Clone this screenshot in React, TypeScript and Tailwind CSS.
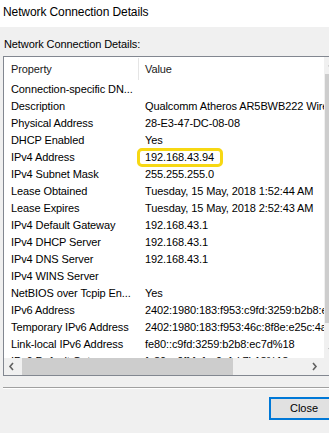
const ROWS: [string, string][] = [
  ["Connection-specific DN...", ""],
  ["Description", "Qualcomm Atheros AR5BWB222 Wireless Network Adapter"],
  ["Physical Address", "28-E3-47-DC-08-08"],
  ["DHCP Enabled", "Yes"],
  ["IPv4 Address", "192.168.43.94"],
  ["IPv4 Subnet Mask", "255.255.255.0"],
  ["Lease Obtained", "Tuesday, 15 May, 2018 1:52:44 AM"],
  ["Lease Expires", "Tuesday, 15 May, 2018 2:52:43 AM"],
  ["IPv4 Default Gateway", "192.168.43.1"],
  ["IPv4 DHCP Server", "192.168.43.1"],
  ["IPv4 DNS Server", "192.168.43.1"],
  ["IPv4 WINS Server", ""],
  ["NetBIOS over Tcpip En...", "Yes"],
  ["IPv6 Address", "2402:1980:183:f953:c9fd:3259:b2b8:ec7d"],
  ["Temporary IPv6 Address", "2402:1980:183:f953:46c:8f8e:e25c:4a21"],
  ["Link-local IPv6 Address", "fe80::c9fd:3259:b2b8:ec7d%18"],
  ["IPv6 Default Gateway", "fe80::c0ff:fe1a:9c1d:7b18%18"],
];

function Chevron({ dir }: { dir: "left" | "right" | "up" | "down" }) {
  const d = {
    left: "M5 1 L2 4.5 L5 8",
    right: "M2 1 L5 4.5 L2 8",
    up: "M1 5.5 L4.5 2 L8 5.5",
    down: "M1 3 L4.5 6.5 L8 3",
  }[dir];
  return (
    <svg width="9" height="9" viewBox="0 0 9 9">
      <path d={d} fill="none" stroke="#606060" strokeWidth="1.6" />
    </svg>
  );
}

export default function App() {
  return (
    <div className="relative w-[329px] h-[433px] overflow-hidden bg-[#f0f0f0] font-['Liberation_Sans',Arial,sans-serif] text-black">
      {/* Title bar */}
      <div className="h-[27px] bg-white pl-[3px] pt-[5px] text-[12px] leading-[15px] tracking-[-0.1px] whitespace-nowrap">
        Network Connection Details
      </div>

      <div className="pl-[4px] pt-[11px] text-[11px] leading-[13px] tracking-[-0.1px] whitespace-nowrap">Network Connection Details:</div>

      {/* List view */}
      <div className="mt-[5px] ml-[3px] w-[340px] flex border border-[#828790] bg-white text-[11px] leading-[13px] tracking-[-0.1px]">
        <div className="w-[320px] flex flex-col">
          <div className="h-[301px] overflow-hidden">
            <div className="flex h-[24px] text-[#1a1a1a]">
              <div className="w-[134px] pl-[7px] flex items-center">Property</div>
              <div className="w-px bg-[#e5e5e5] my-[1px]" />
              <div className="pl-[6px] flex items-center">Value</div>
            </div>
            {ROWS.map(([k, v]) => (
              <div key={k} className="flex h-[17px] items-center whitespace-nowrap">
                <div className="w-[135px] shrink-0 pl-[7px]">{k}</div>
                <div className="pl-[6px]">{v}</div>
              </div>
            ))}
          </div>
          {/* Horizontal scrollbar */}
          <div className="h-[17px] flex bg-[#f0f0f0]">
            <div className="w-[17px] flex items-center justify-center">
              <Chevron dir="left" />
            </div>
            <div className="flex-1 flex items-center px-px">
              <div className="w-[211px] h-[17px] bg-[#cdcdcd]" />
            </div>
            <div className="w-[17px] flex items-center justify-center">
              <Chevron dir="right" />
            </div>
          </div>
        </div>
        {/* Vertical scrollbar */}
        <div className="w-[17px] flex flex-col bg-[#f0f0f0]">
          <div className="h-[17px] flex items-center justify-center">
            <Chevron dir="up" />
          </div>
          <div className="flex-1 px-px pb-[18px]">
            <div className="h-full bg-[#cdcdcd]" />
          </div>
          <div className="h-[17px] flex items-center justify-center">
            <Chevron dir="down" />
          </div>
          <div className="h-[17px]" />
        </div>
      </div>

      {/* Separator */}
      <div className="mt-[11px] ml-[3px] h-px bg-[#a0a0a0]" />
      <div className="ml-[3px] h-px bg-white" />

      {/* Close button */}
      <div className="mt-[8px] ml-[269px] w-[70px] h-[23px] border-2 border-[#0078d7] bg-[#e1e1e1] flex items-center justify-center text-[11px]">
        Close
      </div>

      {/* Highlight */}
      <div className="absolute left-[137px] top-[148px] w-[86px] h-[19px] border-[3px] border-[#f7d813] rounded-[5px]" />
    </div>
  );
}
